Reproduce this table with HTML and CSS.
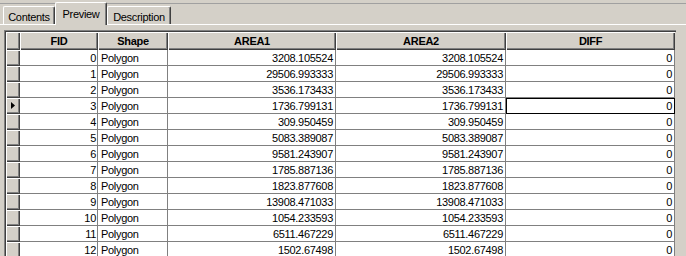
FILE: index.html
```html
<!DOCTYPE html>
<html>
<head>
<meta charset="utf-8">
<link rel="stylesheet" href="styles.css">
</head>
<body>
<div class="window">
  <div class="tabstrip">
    <div class="tab">Contents</div>
    <div class="tab tab-active">Preview</div>
    <div class="tab">Description</div>
  </div>
  <div class="panel">
    <div class="frame">
      <div class="table">
        <div class="hcell"></div>
        <div class="hcell">FID</div>
        <div class="hcell">Shape</div>
        <div class="hcell">AREA1</div>
        <div class="hcell">AREA2</div>
        <div class="hcell">DIFF</div>

        <div class="sel"></div><div class="cell num fid">0</div><div class="cell">Polygon</div><div class="cell num">3208.105524</div><div class="cell num">3208.105524</div><div class="cell num">0</div>
        <div class="sel"></div><div class="cell num fid">1</div><div class="cell">Polygon</div><div class="cell num">29506.993333</div><div class="cell num">29506.993333</div><div class="cell num">0</div>
        <div class="sel"></div><div class="cell num fid">2</div><div class="cell">Polygon</div><div class="cell num">3536.173433</div><div class="cell num">3536.173433</div><div class="cell num">0</div>
        <div class="sel sel-current"><svg class="arrow" width="4" height="7" viewBox="0 0 4 7"><polygon points="0,0 4,3.5 0,7" fill="#000"/></svg></div><div class="cell num fid">3</div><div class="cell">Polygon</div><div class="cell num">1736.799131</div><div class="cell num">1736.799131</div><div class="cell num focus">0</div>
        <div class="sel"></div><div class="cell num fid">4</div><div class="cell">Polygon</div><div class="cell num">309.950459</div><div class="cell num">309.950459</div><div class="cell num">0</div>
        <div class="sel"></div><div class="cell num fid">5</div><div class="cell">Polygon</div><div class="cell num">5083.389087</div><div class="cell num">5083.389087</div><div class="cell num">0</div>
        <div class="sel"></div><div class="cell num fid">6</div><div class="cell">Polygon</div><div class="cell num">9581.243907</div><div class="cell num">9581.243907</div><div class="cell num">0</div>
        <div class="sel"></div><div class="cell num fid">7</div><div class="cell">Polygon</div><div class="cell num">1785.887136</div><div class="cell num">1785.887136</div><div class="cell num">0</div>
        <div class="sel"></div><div class="cell num fid">8</div><div class="cell">Polygon</div><div class="cell num">1823.877608</div><div class="cell num">1823.877608</div><div class="cell num">0</div>
        <div class="sel"></div><div class="cell num fid">9</div><div class="cell">Polygon</div><div class="cell num">13908.471033</div><div class="cell num">13908.471033</div><div class="cell num">0</div>
        <div class="sel"></div><div class="cell num fid">10</div><div class="cell">Polygon</div><div class="cell num">1054.233593</div><div class="cell num">1054.233593</div><div class="cell num">0</div>
        <div class="sel"></div><div class="cell num fid">11</div><div class="cell">Polygon</div><div class="cell num">6511.467229</div><div class="cell num">6511.467229</div><div class="cell num">0</div>
        <div class="sel"></div><div class="cell num fid">12</div><div class="cell">Polygon</div><div class="cell num">1502.67498</div><div class="cell num">1502.67498</div><div class="cell num">0</div>
      </div>
    </div>
  </div>
</div>
</body>
</html>
```
FILE: styles.css
```css
html, body {
  margin: 0;
  padding: 0;
  height: 256px;
  overflow: hidden;
  background: #d4d0c8;
}

.window {
  font-family: "Liberation Sans", Arial, sans-serif;
  font-size: 11px;
  letter-spacing: -0.3px;
  color: #000;
  width: 686px;
}

.tabstrip {
  display: flex;
  align-items: flex-end;
  height: 24px;
  padding-left: 3px;
  border-bottom: 1px solid #fff;
  background: linear-gradient(#d4d0c8 3px, #a0a0a0 3px, #a0a0a0 4px, #d4d0c8 4px);
}

.tab {
  box-sizing: border-box;
  height: 18px;
  padding-top: 4px;
  line-height: 13px;
  text-align: center;
  background: #d4d0c8;
  border-top: 1px solid #fff;
  border-left: 1px solid #fff;
  border-right: 1px solid #404040;
  box-shadow: inset -1px 0 #808080;
  border-radius: 2px 2px 0 0;
}

.tab:nth-child(1) { width: 52px; }
.tab:nth-child(2) { width: 52px; }
.tab:nth-child(3) { width: 64px; }

.tab-active {
  height: 23px;
  padding-top: 5px;
  margin-bottom: -1px;
  position: relative;
  z-index: 1;
}

.panel {
  padding: 5px 0 0 4px;
}

.frame {
  width: 671px;
  border-top: 1px solid #808080;
  border-left: 1px solid #808080;
}

.table {
  display: grid;
  grid-template-columns: 14px 78px 70px 168px 170px 169px;
  grid-template-rows: 18px;
  grid-auto-rows: 16px;
  border-top: 1px solid #404040;
  border-left: 1px solid #404040;
}

.hcell {
  box-sizing: border-box;
  background: #d4d0c8;
  box-shadow: inset 1px 1px #fff, inset -1px -1px #404040, inset -2px -2px #808080;
  font-weight: bold;
  text-align: center;
  padding-top: 2px;
  line-height: 14px;
  white-space: nowrap;
}

.sel {
  box-sizing: border-box;
  background: #d4d0c8;
  box-shadow: inset 1px 1px #fff, inset -1px -1px #404040, inset -2px -2px #808080;
  display: flex;
  align-items: center;
  justify-content: center;
}

.arrow {
  display: block;
  margin-left: -1px;
  margin-top: -1px;
}

.cell {
  box-sizing: border-box;
  background: #fff;
  border-right: 1px solid #808080;
  border-bottom: 1px solid #808080;
  padding: 1px 2px 0 3px;
  line-height: 14px;
  white-space: nowrap;
  overflow: hidden;
}

.num {
  text-align: right;
  padding-right: 2px;
}

.fid {
  padding-right: 1px;
}

.focus {
  outline: 1px solid #000;
  outline-offset: -1px;
}
```
